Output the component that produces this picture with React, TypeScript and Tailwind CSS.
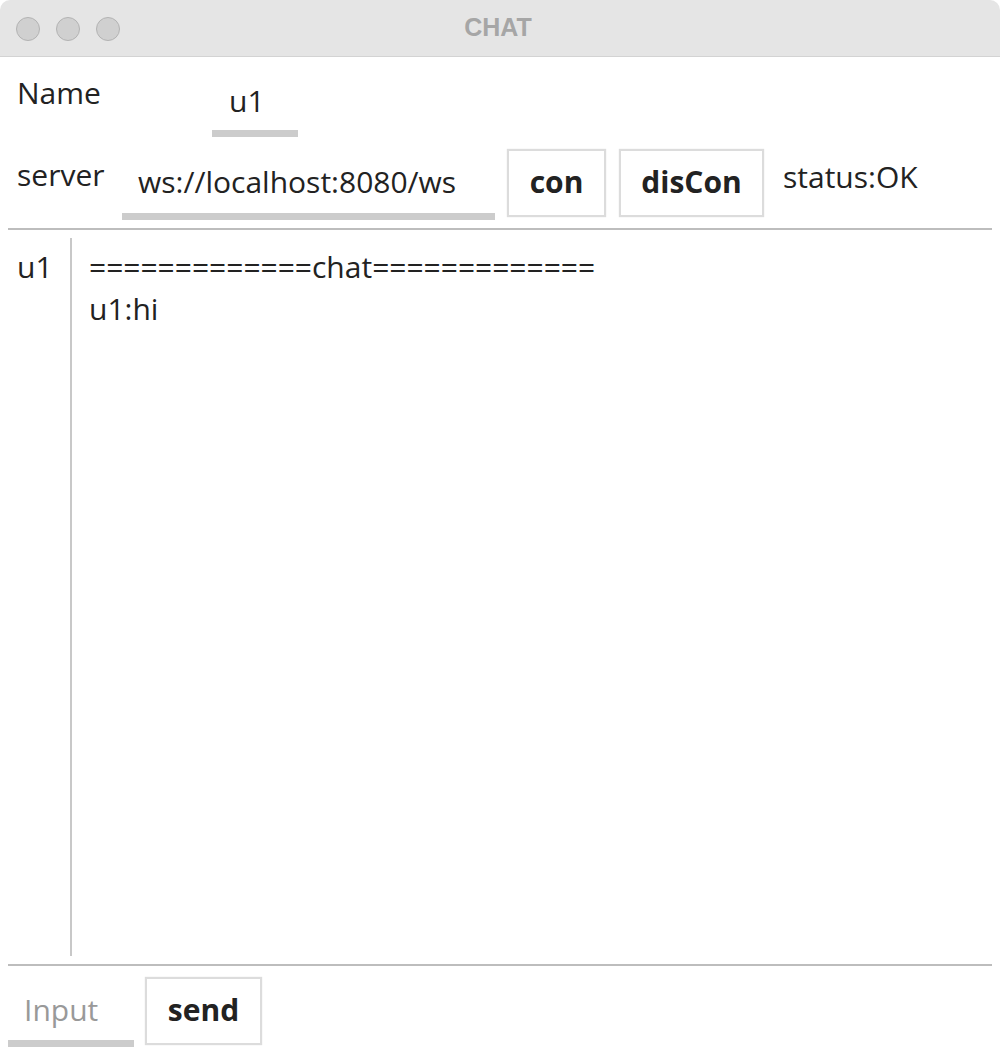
import React from "react";

const font = { fontFamily: '"Open Sans", "Noto Sans", sans-serif' };

function Btn({ label, w }: { label: string; w: string }) {
  return (
    <div
      className={`${w} h-[68px] flex items-center justify-center border-2 border-[#dcdcdc] bg-white shadow-[0_0_1px_rgba(0,0,0,0.15)] font-bold text-[30px] text-[#222] leading-none`}
    >
      <span className="mt-[-2px]">{label}</span>
    </div>
  );
}

export default function App() {
  return (
    <div className="w-[1000px] h-[1056px] bg-white overflow-hidden text-[#222]" style={font}>
      {/* Title bar */}
      <div className="h-[57px] rounded-t-[10px] bg-[#e5e5e5] border-b border-[#d3d3d3] flex items-center relative">
        <div className="flex items-center gap-[16px] pl-[16px] pt-[1px]">
          <div className="w-[24px] h-[24px] rounded-full bg-[#d0d0d0] border border-[#b3b3b3]" />
          <div className="w-[24px] h-[24px] rounded-full bg-[#d0d0d0] border border-[#b3b3b3]" />
          <div className="w-[24px] h-[24px] rounded-full bg-[#d0d0d0] border border-[#b3b3b3]" />
        </div>
        <div
          className="absolute left-0 right-0 top-0 h-[56px] flex items-center justify-center text-[25px] font-bold text-[#a6a6a6]"
          style={{ fontFamily: '"Liberation Sans", Arial, sans-serif' }}
        >
          <span className="ml-[-4px]">CHAT</span>
        </div>
      </div>

      {/* Name row */}
      <div className="flex items-start h-[92px] text-[30px] leading-[40px]">
        <div className="ml-[17px] mt-[16px] w-[195px]">Name</div>
        <div className="mt-[24px] w-[86px] flex flex-col">
          <div className="pl-[17px]">u1</div>
          <div className="mt-[9px] h-[7px] bg-[#cccccc]" />
        </div>
      </div>

      {/* Server row */}
      <div className="flex items-start h-[71px] text-[30px] leading-[40px]">
        <div className="ml-[17px] mt-[6px] w-[105px]">server</div>
        <div className="mt-[13px] w-[373px] flex flex-col">
          <div className="pl-[16px] whitespace-nowrap">ws://localhost:8080/ws</div>
          <div className="mt-[11px] h-[7px] bg-[#cccccc]" />
        </div>
        <div className="ml-[12px]">
          <Btn label="con" w="w-[99px]" />
        </div>
        <div className="ml-[13px]">
          <Btn label="disCon" w="w-[145px]" />
        </div>
        <div className="ml-[19px] mt-[8px] whitespace-nowrap">status:OK</div>
      </div>

      <div className="mx-[8px] mt-[8px] h-[2px] bg-[#bdbdbd]" />

      {/* Chat area */}
      <div className="mx-[8px] h-[734px] flex py-[8px] text-[30px] leading-[42px]">
        <div className="w-[62px] pl-[9px] pt-[8px]">u1</div>
        <div className="w-[2px] bg-[#c8c8c8]" />
        <div className="pl-[17px] pt-[8px] flex flex-col whitespace-nowrap">
          <div>=============chat=============</div>
          <div>u1:hi</div>
        </div>
      </div>

      <div className="mx-[8px] h-[2px] bg-[#bdbdbd]" />

      {/* Bottom row */}
      <div className="flex items-start text-[30px] leading-[40px]">
        <div className="ml-[8px] mt-[24px] w-[126px] flex flex-col">
          <div className="pl-[16px] text-[#999999]">Input</div>
          <div className="mt-[10px] h-[7px] bg-[#cccccc]" />
        </div>
        <div className="ml-[11px] mt-[11px]">
          <Btn label="send" w="w-[117px]" />
        </div>
      </div>
    </div>
  );
}
